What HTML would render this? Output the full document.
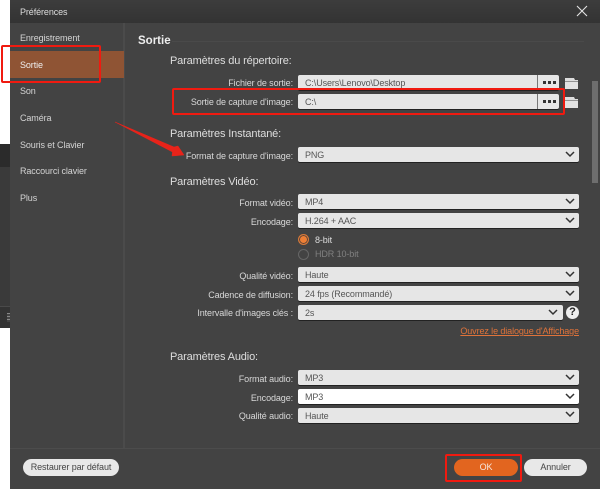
<!DOCTYPE html>
<html><head><meta charset="utf-8"><style>
*{box-sizing:border-box}
html,body{margin:0;padding:0;background:#fff}
#p{position:relative;width:600px;height:489px;overflow:hidden;background:#fff;font-family:"Liberation Sans",sans-serif;color:#d8d8d8;filter:blur(.25px)}
#p div,#p a,#p svg{position:absolute}
.t{font-size:9px;line-height:12px;white-space:nowrap;letter-spacing:-.1px}
.m{left:20px;color:#d4d4d4}
.l{right:307px;text-align:right}
.h{left:170px;font-size:11px;line-height:14px;white-space:nowrap;color:#dedede;letter-spacing:-.15px}
.f{left:298px;height:15px;background:#e6e6e6;border-radius:2px;color:#555;font-size:9px;letter-spacing:-.1px;line-height:16px;padding-left:7px;white-space:nowrap;box-shadow:0 1px 0 #222}
.r{border:2px solid #f01a10;border-radius:2px}
.d{width:13px;height:3px;background:linear-gradient(90deg,#333 3px,transparent 3px,transparent 5px,#333 5px,#333 8px,transparent 8px,transparent 10px,#333 10px)}
.c path{stroke:#333;stroke-width:1.5;fill:none}
</style></head><body><div id="p">
<div style="left:0;top:144px;width:10px;height:23px;background:#2b2b2b"></div>
<div style="left:0;top:167px;width:10px;height:161px;background:#3a3a3a"></div>
<div style="left:0;top:306px;width:10px;height:22px;background:#333;border-top:1px solid #4a4a4a"></div>
<div style="left:7px;top:313px;width:3px;height:9px;background:repeating-linear-gradient(#888 0 1px,#444 1px 3px)"></div>
<div style="left:10px;top:0;width:590px;height:489px;background:#434343"></div>
<div style="left:10px;top:0;width:590px;height:23px;background:linear-gradient(#3c3c3c,#333)"></div>
<div class="t" style="left:20px;top:6px;color:#ddd">Préférences</div>
<svg style="left:576px;top:5px" width="12" height="12" viewBox="0 0 12 12"><path d="M1 1L11 11M11 1L1 11" stroke="#e4e4e4" stroke-width="1.1" fill="none"/></svg>
<div style="left:123px;top:23px;width:2px;height:425px;background:#4b4b4b"></div>
<div style="left:10px;top:448px;width:590px;height:1px;background:#4c4c4c"></div>
<div style="left:10px;top:51px;width:114px;height:27px;background:#8f5434"></div>
<div class="t m" style="top:32px">Enregistrement</div>
<div class="t m" style="top:59px;color:#eee">Sortie</div>
<div class="t m" style="top:85px">Son</div>
<div class="t m" style="top:112px">Caméra</div>
<div class="t m" style="top:139px">Souris et Clavier</div>
<div class="t m" style="top:165px">Raccourci clavier</div>
<div class="t m" style="top:192px">Plus</div>

<div style="left:138px;top:34px;font-size:11.5px;line-height:14px;font-weight:bold;color:#eee">Sortie</div>
<div style="left:172px;top:41px;width:412px;height:1px;background:#4a4a4a"></div>

<div class="h" style="top:54px">Paramètres du répertoire:</div>
<div class="h" style="top:127px">Paramètres Instantané:</div>
<div class="h" style="top:175px">Paramètres Vidéo:</div>
<div class="h" style="top:350px">Paramètres Audio:</div>

<div class="t l" style="top:77px">Fichier de sortie:</div>
<div class="t l" style="top:96px">Sortie de capture d'image:</div>
<div class="t l" style="top:150px">Format de capture d'image:</div>
<div class="t l" style="top:197px">Format vidéo:</div>
<div class="t l" style="top:216px">Encodage:</div>
<div class="t l" style="top:270px">Qualité vidéo:</div>
<div class="t l" style="top:289px">Cadence de diffusion:</div>
<div class="t l" style="top:307px">Intervalle d'images clés :</div>
<div class="t l" style="top:373px">Format audio:</div>
<div class="t l" style="top:392px">Encodage:</div>
<div class="t l" style="top:410px">Qualité audio:</div>

<div class="f" style="top:75px;width:261px">C:\Users\Lenovo\Desktop</div>
<div class="f" style="top:94px;width:261px">C:\</div>
<div style="left:537px;top:75px;width:1px;height:15px;background:#777"></div>
<div style="left:537px;top:94px;width:1px;height:15px;background:#777"></div>
<div class="d" style="left:543px;top:81px"></div>
<div class="d" style="left:543px;top:100px"></div>
<svg style="left:565px;top:78px" width="14" height="12" viewBox="0 0 14 12"><path d="M0 0H9L10 2H13V3H0Z" fill="#ddd"/><rect y="3.5" width="13" height="7.5" fill="#e2e2e2"/></svg>
<svg style="left:565px;top:97px" width="14" height="12" viewBox="0 0 14 12"><path d="M0 0H9L10 2H13V3H0Z" fill="#ddd"/><rect y="3.5" width="13" height="7.5" fill="#e2e2e2"/></svg>

<div class="f" style="top:147px;width:281px">PNG</div>
<div class="f" style="top:194px;width:281px">MP4</div>
<div class="f" style="top:213px;width:281px">H.264 + AAC</div>
<div class="f" style="top:267px;width:281px">Haute</div>
<div class="f" style="top:286px;width:281px">24 fps (Recommandé)</div>
<div class="f" style="top:305px;width:265px">2s</div>
<div class="f" style="top:370px;width:281px">MP3</div>
<div class="f" style="top:389px;width:281px;background:#fff">MP3</div>
<div class="f" style="top:408px;width:281px">Haute</div>

<svg class="c" style="left:565px;top:151px" width="10" height="7" viewBox="0 0 10 7"><path d="M1 1L5 5L9 1"/></svg>
<svg class="c" style="left:565px;top:198px" width="10" height="7" viewBox="0 0 10 7"><path d="M1 1L5 5L9 1"/></svg>
<svg class="c" style="left:565px;top:217px" width="10" height="7" viewBox="0 0 10 7"><path d="M1 1L5 5L9 1"/></svg>
<svg class="c" style="left:565px;top:271px" width="10" height="7" viewBox="0 0 10 7"><path d="M1 1L5 5L9 1"/></svg>
<svg class="c" style="left:565px;top:290px" width="10" height="7" viewBox="0 0 10 7"><path d="M1 1L5 5L9 1"/></svg>
<svg class="c" style="left:548px;top:309px" width="10" height="7" viewBox="0 0 10 7"><path d="M1 1L5 5L9 1"/></svg>
<svg class="c" style="left:565px;top:374px" width="10" height="7" viewBox="0 0 10 7"><path d="M1 1L5 5L9 1"/></svg>
<svg class="c" style="left:565px;top:393px" width="10" height="7" viewBox="0 0 10 7"><path d="M1 1L5 5L9 1"/></svg>
<svg class="c" style="left:565px;top:411px" width="10" height="7" viewBox="0 0 10 7"><path d="M1 1L5 5L9 1"/></svg>

<div style="left:298px;top:234px;width:11px;height:11px;border-radius:50%;border:1px solid #d97a3a;background:#ee7f35;box-shadow:inset 0 0 0 1px #5a4438"></div>
<div class="t" style="left:315px;top:234px;color:#ddd">8-bit</div>
<div style="left:298px;top:249px;width:11px;height:11px;border-radius:50%;border:1px solid #666"></div>
<div class="t" style="left:315px;top:248px;color:#808080">HDR 10-bit</div>

<div style="left:566px;top:306px;width:13px;height:13px;border-radius:50%;background:#eee;color:#222;font:bold 11px/13px 'Liberation Sans',sans-serif;text-align:center">?</div>
<div class="t" style="right:21px;top:325px;color:#e0733a;text-decoration:underline">Ouvrez le dialogue d'Affichage</div>

<div style="left:592px;top:81px;width:6px;height:102px;background:#6e6e6e"></div>

<div class="t" style="left:23px;top:459px;width:96px;height:17px;border-radius:9px;background:#e8e8e8;color:#444;line-height:17px;text-align:center">Restaurer par défaut</div>
<div class="t" style="left:454px;top:459px;width:64px;height:17px;border-radius:9px;background:#e2651f;color:#f5e6dc;line-height:17px;text-align:center">OK</div>
<div class="t" style="left:524px;top:459px;width:63px;height:17px;border-radius:9px;background:#e8e8e8;color:#444;line-height:17px;text-align:center">Annuler</div>

<div class="r" style="left:1px;top:45px;width:100px;height:38px"></div>
<div class="r" style="left:172px;top:88px;width:393px;height:27px"></div>
<div class="r" style="left:445px;top:454px;width:77px;height:28px"></div>
<svg style="left:0;top:0" width="600" height="489" viewBox="0 0 600 489"><path d="M115 122L174 147L178 146L184 155L172 156L172.5 152Z" fill="#e8231a" stroke="#e8231a" stroke-width=".5"/></svg>
</div></body></html>
